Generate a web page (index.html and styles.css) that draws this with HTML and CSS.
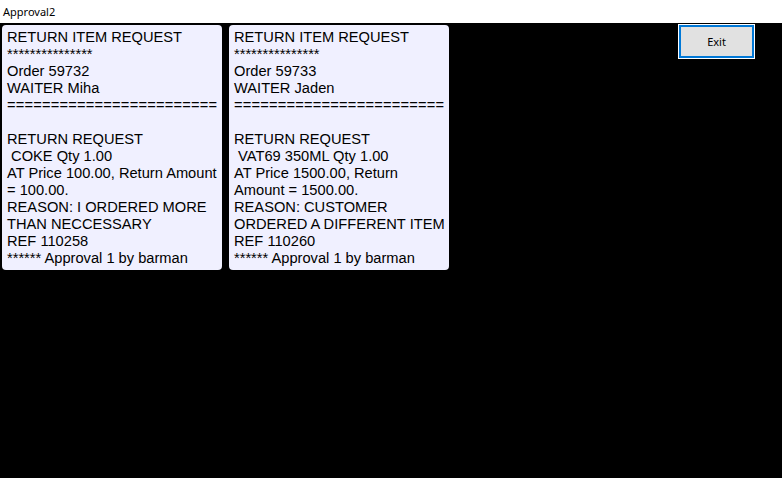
FILE: index.html
```html
<!DOCTYPE html>
<html>
<head>
<meta charset="utf-8">
<link rel="stylesheet" href="styles.css">
</head>
<body>
<div class="titlebar">Approval2</div>
<div class="main">
  <div class="cards">
    <div class="card">
      <div class="line">RETURN ITEM REQUEST</div>
      <div class="line">***************</div>
      <div class="line">Order 59732</div>
      <div class="line">WAITER Miha</div>
      <div class="line rule">========================</div>
      <div class="line blank"></div>
      <div class="line">RETURN REQUEST</div>
      <div class="line"> COKE Qty 1.00</div>
      <div class="line">AT Price 100.00, Return Amount</div>
      <div class="line">= 100.00.</div>
      <div class="line">REASON: I ORDERED MORE</div>
      <div class="line">THAN NECCESSARY</div>
      <div class="line">REF 110258</div>
      <div class="line">****** Approval 1 by barman</div>
    </div>
    <div class="card">
      <div class="line">RETURN ITEM REQUEST</div>
      <div class="line">***************</div>
      <div class="line">Order 59733</div>
      <div class="line">WAITER Jaden</div>
      <div class="line rule">========================</div>
      <div class="line blank"></div>
      <div class="line">RETURN REQUEST</div>
      <div class="line"> VAT69 350ML Qty 1.00</div>
      <div class="line">AT Price 1500.00, Return</div>
      <div class="line">Amount = 1500.00.</div>
      <div class="line">REASON: CUSTOMER</div>
      <div class="line">ORDERED A DIFFERENT ITEM</div>
      <div class="line">REF 110260</div>
      <div class="line">****** Approval 1 by barman</div>
    </div>
  </div>
  <button class="exit">Exit</button>
</div>
</body>
</html>
```
FILE: styles.css
```css
html, body {
  margin: 0;
  padding: 0;
  height: 100%;
  background: #000;
}
body {
  display: flex;
  flex-direction: column;
  overflow: hidden;
}
.titlebar {
  height: 23px;
  background: #fff;
  font-family: "Noto Sans", "Liberation Sans", sans-serif;
  font-size: 11px;
  line-height: 23px;
  padding-left: 3px;
  color: #000;
  flex: none;
}
.main {
  flex: 1;
  display: flex;
  justify-content: space-between;
  align-items: flex-start;
  padding: 1px 28px 0 2px;
}
.cards {
  display: flex;
  gap: 7px;
  margin-top: 1px;
}
.card {
  width: 220px;
  height: 245px;
  box-sizing: border-box;
  background: #f0f0ff;
  border-radius: 4px;
  padding: 4px 0 0 5px;
  font-family: "Liberation Sans", Arial, sans-serif;
  font-size: 14.67px;
  line-height: 17px;
  color: #000;
}
.line {
  white-space: pre;
  height: 17px;
}
.rule {
  letter-spacing: 0.2px;
}
.exit {
  width: 75px;
  height: 33px;
  background: #e1e1e1;
  border: 2px solid #0078d7;
  outline: 1px solid #fff;
  outline-offset: 0;
  font-family: "Noto Sans", "Liberation Sans", sans-serif;
  font-size: 11px;
  color: #000;
  padding: 0;
  margin-top: 1px;
}
```
